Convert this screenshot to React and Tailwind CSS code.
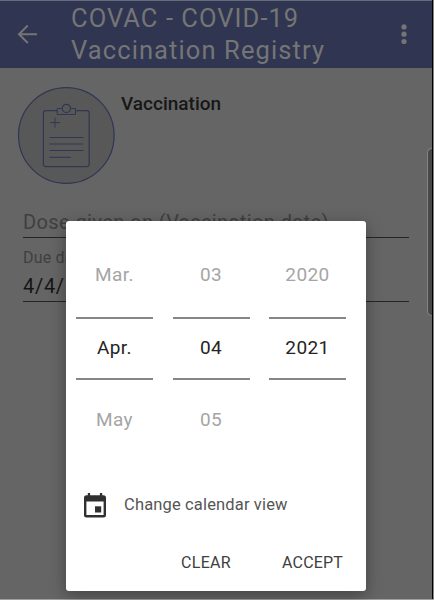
import React from "react";

const columns = [
  { values: ["Mar.", "Apr.", "May"] },
  { values: ["03", "04", "05"] },
  { values: ["2020", "2021", ""] },
];

function Header() {
  return (
    <header className="flex h-[68px] w-full items-start border-t border-[#656b7d] bg-[#303551] text-[#757575]">
      <svg className="mt-[23px] ml-[17px] h-[21px] w-[21px] shrink-0" viewBox="0 0 21 21" fill="none" stroke="currentColor" strokeWidth="2">
        <path d="M20 10.2H2M10.8 1.5L2 10.2l8.8 8.8" />
      </svg>
      <h1 className="mt-[1px] ml-[33px] grow text-[25.5px] leading-[32px] whitespace-nowrap">
        <span className="block tracking-[1.05px]">COVAC - COVID-19</span>
        <span className="block tracking-[1.1px]">Vaccination Registry</span>
      </h1>
      <svg className="mt-[22px] mr-[25px] h-[22px] w-[6px] shrink-0" viewBox="0 0 6 22" fill="currentColor">
        <circle cx="3" cy="3.9" r="2.6" />
        <circle cx="3" cy="11.2" r="2.6" />
        <circle cx="3" cy="18.5" r="2.6" />
      </svg>
    </header>
  );
}

function ClipboardBadge() {
  return (
    <svg className="h-[98px] w-[98px] shrink-0" viewBox="0 0 98 98" fill="none" stroke="#303654">
      <circle cx="49.3" cy="49.5" r="47.8" fill="#585858" strokeWidth="1.2" />
      <rect x="26.4" y="24.6" width="45.8" height="56" rx="2.5" strokeWidth="1.2" />
      <path d="M44.7 22.5H40.2v6h18.3v-6h-4.2" fill="#585858" />
      <circle cx="49.4" cy="22.4" r="4.1" fill="#585858" strokeWidth="1.2" />
      <path d="M33.2 36.6h10M38 31.5v10M32.5 51.5h34M32.5 58h34M32.5 64.5h34M32.5 71.3h21.4" />
    </svg>
  );
}

function DateDialog() {
  return (
    <section className="absolute top-[220.5px] left-[66px] flex h-[370.5px] w-[299.5px] flex-col rounded-[3px] bg-white shadow-[0_4px_16px_rgba(0,0,0,0.35)]">
      <div className="mt-[18.5px] flex gap-[19.5px] pl-[10px] text-[19px]">
        {columns.map(({ values }) => (
          <div key={values[0]} className="flex w-[77px] flex-col text-center tracking-[0.4px]">
            <div className="h-[78px] pt-[4px] leading-[64px] text-[#a5a5a5]">{values[0]}</div>
            <div className="h-[63px] border-y-[2px] border-[#868686] leading-[57px] text-[#242424]">{values[1]}</div>
            <div className="h-[72px] pt-[8px] leading-[64px] text-[#a5a5a5]">{values[2]}</div>
          </div>
        ))}
      </div>
      <button className="mt-[33px] flex h-[40px] items-center pl-[18px] text-[16.5px] tracking-[0.15px] text-[#555555]">
        <svg className="mr-[18px] h-[25px] w-[22px]" viewBox="0 0 22 25" fill="#303030">
          <path fillRule="evenodd" d="M3.8 0h2.3v2.2h9.8V0h2.3v2.2h1.3Q22 2.2 22 4.7v17.2q0 2.5-2.5 2.5h-17Q0 24.4 0 21.9V4.7q0-2.5 2.5-2.5h1.3zM2.4 8.6v13.5h17.2V8.6z" />
          <rect x="11" y="13.3" width="6.2" height="6.2" />
        </svg>
        Change calendar view
      </button>
      <div className="mt-[22px] flex h-[32px] items-center pl-[115px] text-[16px] text-[#404040]">
        <button className="w-[101px] text-left tracking-[0.3px]">CLEAR</button>
        <button className="tracking-[0.2px]">ACCEPT</button>
      </div>
    </section>
  );
}

export default function App() {
  return (
    <div className="relative flex h-[600px] w-[434px] overflow-hidden bg-[#656565] font-['Roboto',sans-serif]">
      <div className="flex w-[432px] shrink-0 flex-col">
        <Header />
        <main className="flex flex-col">
          <div className="flex pt-[18px] pl-[17px]">
            <ClipboardBadge />
            <h2 className="mt-[4px] ml-[6px] text-[19px] leading-[28px] font-medium text-[#171717]">Vaccination</h2>
          </div>
          <div className="mt-[25px] ml-[23px] h-[29px] w-[386px] border-b border-[#252525] text-[20px] leading-[27px] tracking-[0.4px] whitespace-nowrap text-[#404040]">
            Dose given on (Vaccination date)
          </div>
          <div className="mt-[9px] ml-[23px] h-[55px] w-[386px] border-b border-[#252525]">
            <div className="text-[16px] leading-[22px] tracking-[0.2px] text-[#404040]">Due da</div>
            <div className="text-[20px] leading-[34px] tracking-[0.7px] text-[#151515]">4/4/</div>
          </div>
        </main>
      </div>
      <div className="w-px bg-black" />
      <div className="w-px bg-[#858585]" />
      <div className="absolute top-[148px] left-[427px] h-[168px] w-[5px] rounded-l-[5px] border border-r-0 border-[#858585] bg-[#484848]" />
      <div className="absolute top-[599px] left-0 h-px w-full bg-[#a0a0a0]" />
      <DateDialog />
    </div>
  );
}
